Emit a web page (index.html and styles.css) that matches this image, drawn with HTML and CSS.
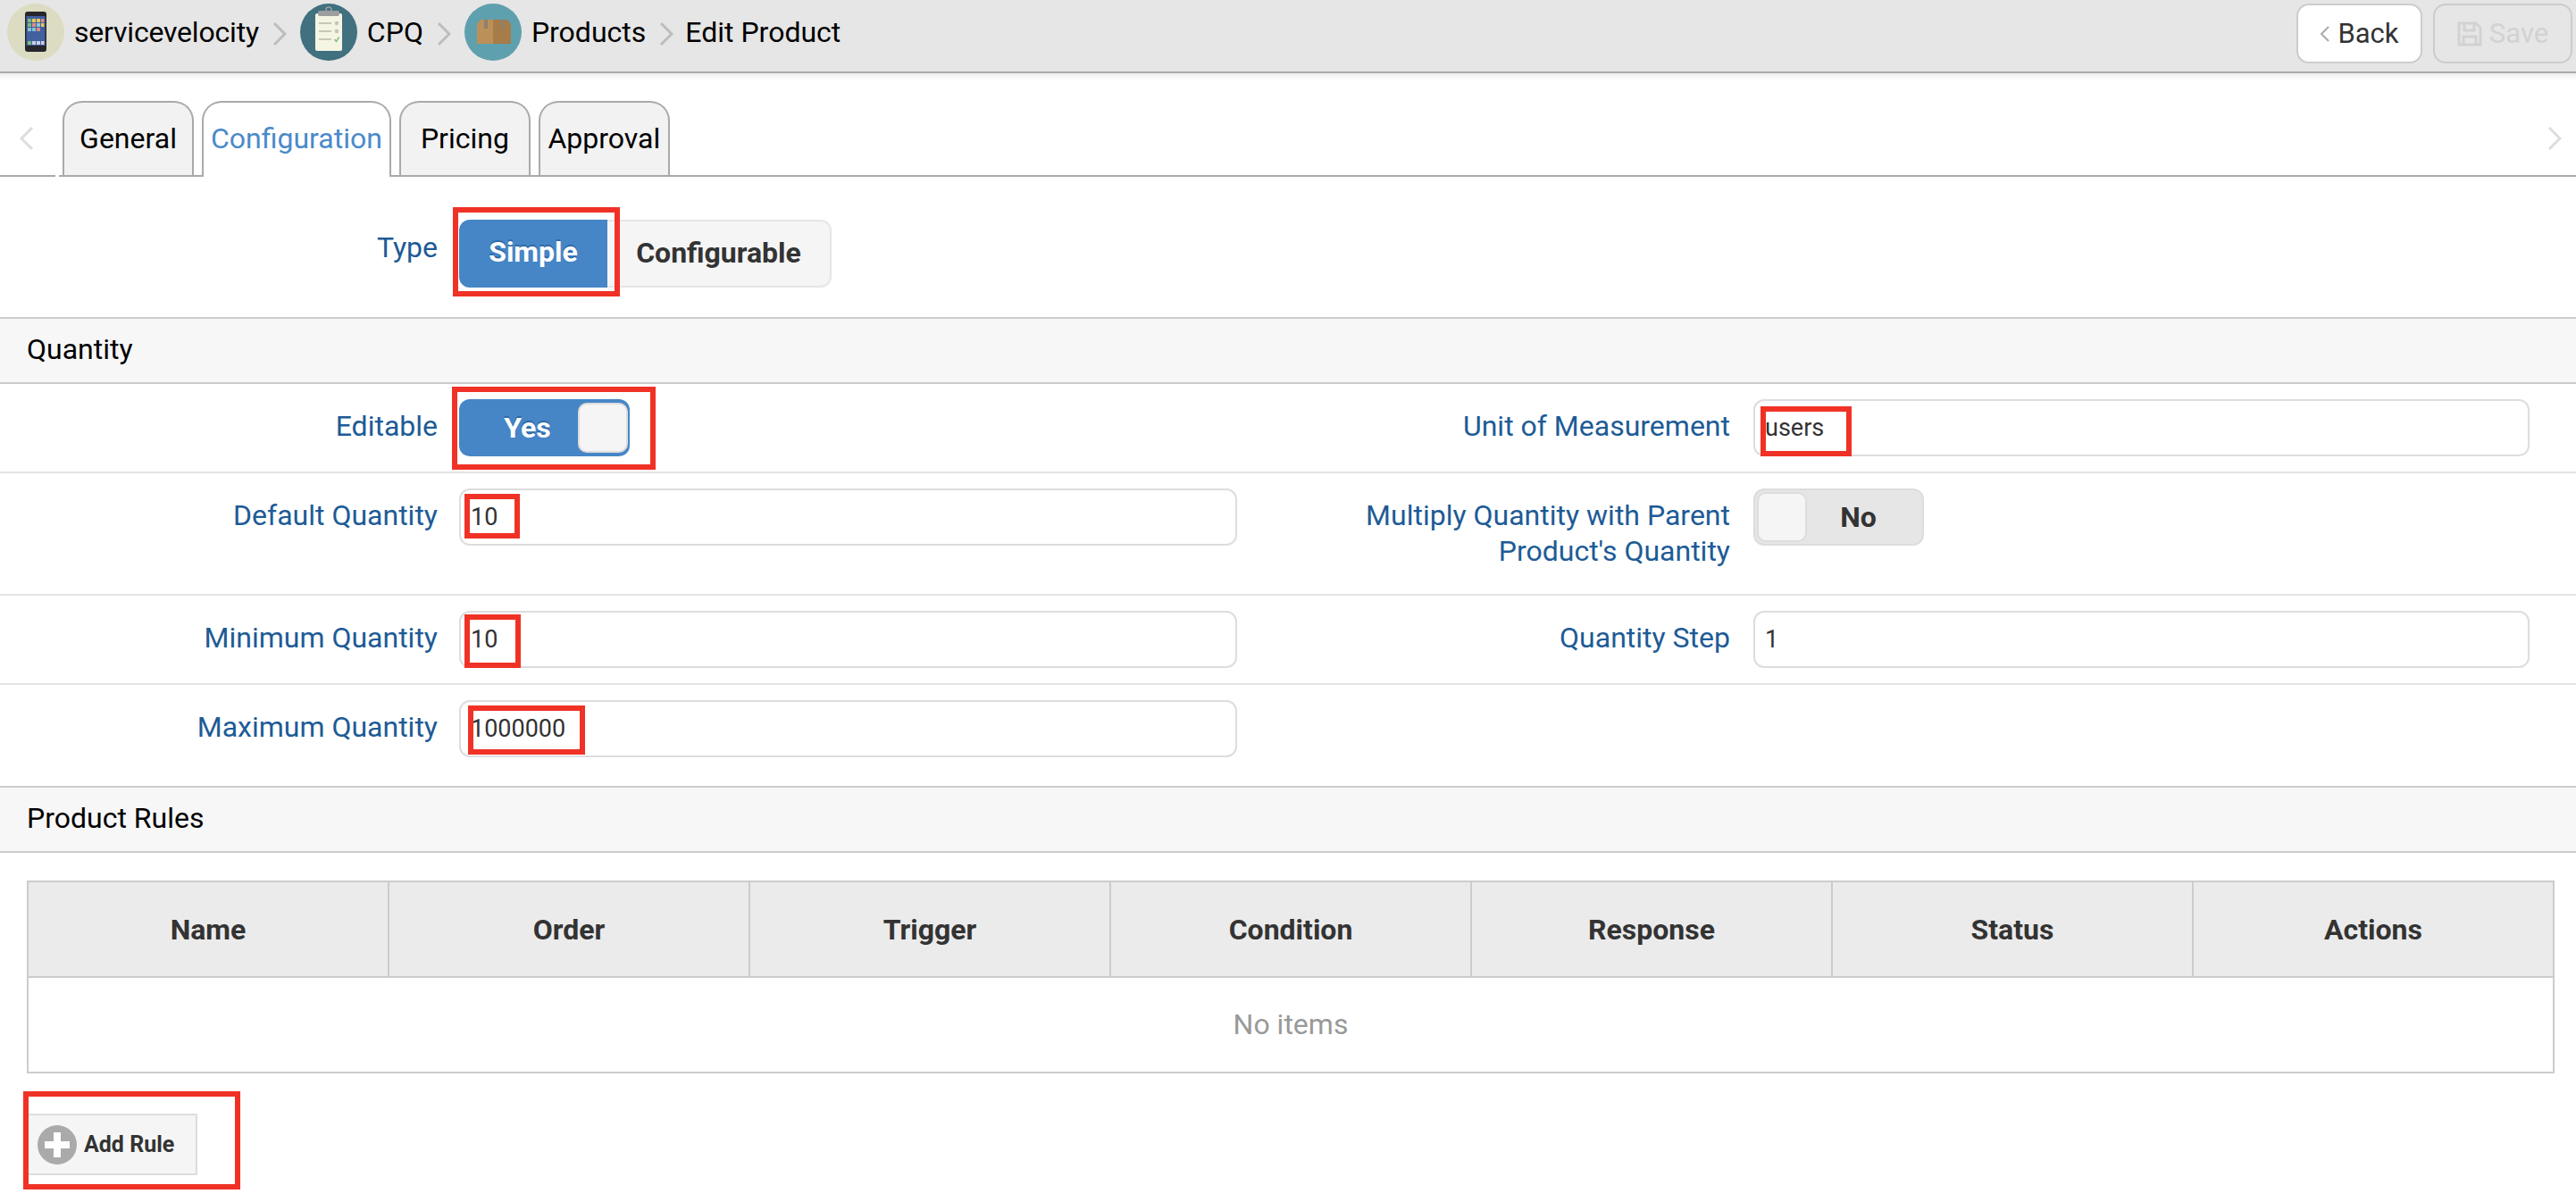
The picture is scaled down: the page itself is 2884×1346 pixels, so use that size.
FILE: index.html
```html
<!DOCTYPE html>
<html lang="en">
<head>
  <meta charset="UTF-8" />
  <title>Edit Product</title>
  <link rel="stylesheet" href="styles.css">
</head>
<body>
  <header class="topbar">
    <nav class="crumbs">
      <svg class="crumb-icon" viewBox="0 0 64 64">
        <circle cx="32" cy="32" r="32" fill="#dcdcc2"/>
        <rect x="20" y="9" width="24" height="45" rx="3" fill="#26262b"/>
        <rect x="21.500" y="14" width="21" height="33" fill="#41609f"/>
        <rect x="23" y="17" width="4" height="4" fill="#7dbb7a"/><rect x="28" y="17" width="4" height="4" fill="#e4c75a"/><rect x="33" y="17" width="4" height="4" fill="#e4c75a"/><rect x="38" y="17" width="3.500" height="4" fill="#d98a8a"/>
        <rect x="23" y="22" width="4" height="4" fill="#7dbb7a"/><rect x="28" y="22" width="4" height="4" fill="#e58a8a"/><rect x="33" y="22" width="4" height="4" fill="#8ec6d8"/><rect x="38" y="22" width="3.500" height="4" fill="#e4c75a"/>
        <rect x="23" y="27" width="4" height="4" fill="#7fc4d0"/><rect x="28" y="27" width="4" height="4" fill="#7fc4d0"/><rect x="33" y="27" width="4" height="4" fill="#d98a8a"/>
        <rect x="23" y="42" width="4" height="4" fill="#7dbb7a"/><rect x="28" y="42" width="4" height="4" fill="#c8cfe8"/><rect x="33" y="42" width="4" height="4" fill="#c8cfe8"/><rect x="38" y="42" width="3.500" height="4" fill="#c8cfe8"/>
      </svg>
      <span class="crumb-text first">servicevelocity</span>
      <svg class="crumb-sep" viewBox="0 0 16 28"><path d="M2 2l12 12L2 26" fill="none" stroke="#bdbdbd" stroke-width="3"/></svg>
      <svg class="crumb-icon" viewBox="0 0 64 64">
        <circle cx="32" cy="32" r="32" fill="#41707f"/>
        <rect x="17" y="11" width="30" height="42" rx="2" fill="#f5f5e4"/>
        <rect x="20" y="8" width="24" height="6" rx="2" fill="#9b9f9f"/>
        <circle cx="32" cy="7" r="3" fill="none" stroke="#9b9f9f" stroke-width="1.500"/>
        <path d="M21 22h14M21 31h14M21 40h14" stroke="#b9b9a8" stroke-width="1.500"/>
        <circle cx="41" cy="22" r="2.200" fill="#c4c4b8"/><circle cx="41" cy="31" r="2.200" fill="#c4c4b8"/>
        <path d="M38.500 40l2 2.500 3-5" fill="none" stroke="#7fc07f" stroke-width="1.500"/>
      </svg>
      <span class="crumb-text">CPQ</span>
      <svg class="crumb-sep" viewBox="0 0 16 28"><path d="M2 2l12 12L2 26" fill="none" stroke="#bdbdbd" stroke-width="3"/></svg>
      <svg class="crumb-icon" viewBox="0 0 64 64">
        <circle cx="32" cy="32" r="32" fill="#5fa0ae"/>
        <path d="M14 23l4-5h14v27H14z" fill="#bb9159"/>
        <path d="M32 18h16l4 5v22H32z" fill="#a67c48"/>
        <rect x="22" y="18" width="4" height="10" fill="#8f8068"/>
        <rect x="41" y="18" width="4" height="10" fill="#8f8068"/>
      </svg>
      <span class="crumb-text">Products</span>
      <svg class="crumb-sep last" viewBox="0 0 16 28"><path d="M2 2l12 12L2 26" fill="none" stroke="#bdbdbd" stroke-width="3"/></svg>
      <span class="crumb-text">Edit Product</span>
    </nav>
    <div class="top-actions">
      <button class="top-btn back-btn">
        <svg class="back-chevron" viewBox="0 0 12 20"><path d="M10 2l-8 8 8 8" fill="none" stroke="#aaa" stroke-width="2"/></svg>
        Back
      </button>
      <button class="top-btn save-btn" disabled>
        <svg class="save-icon" viewBox="0 0 28 28"><path d="M2 2h19l5 5v19H2zM8 2v8h11V2M7 26v-9h14v9" fill="none" stroke="#d2d2d2" stroke-width="3"/></svg>
        Save
      </button>
    </div>
  </header>
  <div class="topbar-shadow"></div>

  <div class="tabbar">
    <div class="tab-nav">
      <svg class="tab-arrow" viewBox="0 0 16 26"><path d="M14 1L2 13l12 12" fill="none" stroke="#ddd" stroke-width="3"/></svg>
    </div>
    <div class="tabs">
      <div class="tab">General</div>
      <div class="tab active">Configuration</div>
      <div class="tab">Pricing</div>
      <div class="tab">Approval</div>
      <svg class="tab-arrow right" viewBox="0 0 16 26"><path d="M2 1l12 12L2 25" fill="none" stroke="#ddd" stroke-width="3"/></svg>
    </div>
  </div>

  <div class="type-row">
    <label class="label">Type</label>
    <div class="type-btns">
      <div class="type-btn on">Simple<span class="mark mark-simple"></span></div>
      <div class="type-btn off">Configurable</div>
    </div>
  </div>

  <div class="section-head">Quantity</div>

  <div class="form-row">
    <label class="label">Editable</label>
    <div class="field">
      <div class="switch yes"><span class="switch-text">Yes</span><span class="knob"></span></div>
      <span class="mark mark-yes"></span>
    </div>
    <label class="label label-r">Unit of Measurement</label>
    <div class="field">
      <input class="text-input" type="text" value="users">
      <span class="mark mark-users"></span>
    </div>
  </div>

  <div class="form-row">
    <label class="label">Default Quantity</label>
    <div class="field">
      <input class="text-input" type="text" value="10">
      <span class="mark mark-default"></span>
    </div>
    <label class="label label-r two-line">Multiply Quantity with Parent Product's Quantity</label>
    <div class="field">
      <div class="switch no"><span class="knob"></span><span class="switch-text">No</span></div>
    </div>
  </div>

  <div class="form-row">
    <label class="label">Minimum Quantity</label>
    <div class="field">
      <input class="text-input" type="text" value="10">
      <span class="mark mark-min"></span>
    </div>
    <label class="label label-r">Quantity Step</label>
    <div class="field">
      <input class="text-input" type="text" value="1">
    </div>
  </div>

  <div class="form-row last">
    <label class="label">Maximum Quantity</label>
    <div class="field">
      <input class="text-input" type="text" value="1000000">
      <span class="mark mark-max"></span>
    </div>
  </div>

  <div class="section-head">Product Rules</div>

  <div class="rules">
    <table class="rules-table">
      <thead>
        <tr>
          <th>Name</th>
          <th>Order</th>
          <th>Trigger</th>
          <th>Condition</th>
          <th>Response</th>
          <th>Status</th>
          <th>Actions</th>
        </tr>
      </thead>
      <tbody>
        <tr><td colspan="7">No items</td></tr>
      </tbody>
    </table>
    <button class="add-btn">
      <svg class="add-icon" viewBox="0 0 44 44">
        <circle cx="22" cy="22" r="22" fill="#aaa"/>
        <path d="M18 8h8v10h10v8H26v10h-8V26H8v-8h10z" fill="#fff"/>
      </svg>
      Add Rule
      <span class="mark mark-add"></span>
    </button>
  </div>
</body>
</html>
```

FILE: styles.css
```css
html, body {
  margin: 0;
  padding: 0;
  background: #fff;
  font-family: Roboto, sans-serif;
  color: #000;
}
body {
  height: 1346px;
  overflow: hidden;
}

/* Top bar */
.topbar {
  display: flex;
  justify-content: space-between;
  height: 80px;
  background: #e6e6e6;
  border-bottom: 2px solid #aaa;
}
.topbar-shadow {
  height: 8px;
  background: linear-gradient(#eee, #fff);
}
.crumbs {
  display: flex;
  align-items: center;
  padding-left: 8px;
  height: 72px;
}
.crumb-icon {
  width: 64px;
  height: 64px;
  flex: none;
}
.crumb-text {
  font-size: 32px;
  margin-left: 11px;
  white-space: nowrap;
}
.crumb-text.first {
  letter-spacing: -0.2px;
}
.crumb-sep {
  width: 16px;
  height: 28px;
  margin: 4px 15px 0 15px;
  flex: none;
}
.crumb-sep.last {
  margin-right: 13px;
}
.crumb-sep + .crumb-text {
  margin-left: 0;
}
.top-actions {
  display: flex;
  gap: 12px;
  padding: 4px 4px 0 0;
}
.top-btn {
  display: flex;
  align-items: center;
  justify-content: center;
  height: 67px;
  border: 2px solid #ccc;
  border-radius: 14px;
  font-family: Roboto, sans-serif;
  font-size: 31px;
  padding: 0;
}
.back-btn {
  width: 141px;
  background: #fff;
  color: #333;
}
.back-chevron {
  width: 12px;
  height: 20px;
  margin-right: 8px;
}
.save-btn {
  width: 156px;
  background: #e6e6e6;
  color: #d2d2d2;
}
.save-icon {
  width: 28px;
  height: 28px;
  margin-right: 8px;
}

/* Tabs */
.tabbar {
  display: flex;
  height: 108px;
  gap: 4px;
}
.tab-nav {
  width: 62px;
  border-bottom: 2px solid #aaa;
  box-sizing: content-box;
  height: 106px;
  position: relative;
}
.tab-arrow {
  width: 16px;
  height: 26px;
  position: absolute;
  left: 22px;
  top: 52px;
}
.tab-arrow.right {
  left: auto;
  right: 16px;
}
.tabs {
  flex: 1;
  display: flex;
  align-items: flex-end;
  gap: 9px;
  padding: 0 0 0 4px;
  border-bottom: 2px solid #aaa;
  height: 106px;
  position: relative;
}
.tab {
  min-width: 147px;
  box-sizing: border-box;
  height: 83px;
  line-height: 80px;
  padding: 0 8px;
  text-align: center;
  font-size: 32px;
  background: #f2f2f2;
  border: 2px solid #aaa;
  border-bottom: none;
  border-radius: 22px 22px 0 0;
}
.tab.active {
  height: 85px;
  margin-bottom: -2px;
  background: #fff;
  color: #4a8ac9;
}

/* Form */
.label {
  box-sizing: border-box;
  padding: 10px 24px 0 0;
  text-align: right;
  font-size: 32px;
  line-height: 40px;
  color: #1d5b96;
}
.label-r {
  padding-right: 26px;
}
.two-line {
  padding-left: 60px;
  padding-bottom: 11px;
}
.type-row {
  display: grid;
  grid-template-columns: 514px 1fr;
  padding-top: 48px;
  height: 157px;
  box-sizing: border-box;
}
.type-row .label {
  padding-top: 11px;
}
.type-btns {
  display: flex;
  height: 76px;
}
.type-btn {
  box-sizing: border-box;
  height: 76px;
  line-height: 71px;
  text-align: center;
  font-size: 32px;
  font-weight: bold;
  position: relative;
}
.type-btn.on {
  width: 166px;
  background: #4686c6;
  color: #fff;
  border-radius: 12px 0 0 12px;
  line-height: 73px;
  text-shadow: 0 -2px 0 #2f6aa6;
}
.type-btn.off {
  width: 251px;
  background: #f5f5f5;
  color: #333;
  border: 2px solid #e6e6e6;
  border-left: none;
  border-radius: 0 12px 12px 0;
}
.section-head {
  box-sizing: border-box;
  height: 75px;
  line-height: 68px;
  padding-left: 30px;
  font-size: 32px;
  background: #f7f7f7;
  border-top: 2px solid #ccc;
  border-bottom: 2px solid #ccc;
}
.form-row {
  display: grid;
  grid-template-columns: 514px 871px 578px 869px;
  padding: 17px 0;
  border-bottom: 2px solid #e3e3e3;
}
.form-row.last {
  border-bottom: none;
  padding-bottom: 32px;
}
.field {
  position: relative;
  height: 64px;
}
.text-input {
  box-sizing: border-box;
  display: block;
  width: 100%;
  height: 64px;
  padding: 0 11px;
  border: 2px solid #ddd;
  border-radius: 12px;
  outline: none;
  background: #fff;
  font-family: Roboto, sans-serif;
  font-size: 27px;
  color: #333;
}

/* Switches */
.switch {
  box-sizing: border-box;
  display: flex;
  align-items: center;
  height: 64px;
  border-radius: 12px;
  font-size: 32px;
  font-weight: bold;
}
.switch.yes {
  width: 191px;
  background: #4686c6;
  color: #fff;
}
.switch.no {
  width: 191px;
  background: #e6e6e6;
  color: #333;
  border: 2px solid #ddd;
}
.switch-text {
  flex: 1;
  text-align: center;
}
.switch.yes .switch-text {
  padding-left: 20px;
  text-shadow: 0 -2px 0 #2f6aa6;
}
.switch.no .switch-text {
  padding-right: 14px;
}
.knob {
  box-sizing: border-box;
  flex: none;
  width: 56px;
  height: 56px;
  background: #f5f5f5;
  border: 2px solid #ddd;
  border-radius: 10px;
}
.switch.yes .knob {
  margin-right: 2px;
}
.switch.no .knob {
  margin-left: 2px;
}

/* Rules table */
.rules {
  padding: 31px 24px 0 30px;
}
.rules-table {
  width: 100%;
  table-layout: fixed;
  border-collapse: collapse;
  border: 2px solid #ccc;
}
.rules-table th {
  height: 105px;
  padding: 0;
  font-size: 32px;
  color: #333;
  background: #ebebeb;
  border-left: 2px solid #ccc;
  border-bottom: 2px solid #ccc;
}
.rules-table td {
  height: 103px;
  padding: 0 0 2px;
  text-align: center;
  font-size: 32px;
  color: #999;
}
.add-btn {
  position: relative;
  display: flex;
  align-items: center;
  box-sizing: border-box;
  width: 191px;
  height: 69px;
  margin-top: 45px;
  padding: 0 0 0 10px;
  gap: 8px;
  background: #f5f5f5;
  border: 2px solid #ddd;
  font-family: Roboto, sans-serif;
  font-size: 25px;
  font-weight: bold;
  color: #333;
}
.add-icon {
  width: 44px;
  height: 44px;
  flex: none;
}

/* Red annotation boxes */
.mark {
  position: absolute;
  z-index: 2;
  box-sizing: border-box;
  border: 6px solid #f03226;
}
.mark-simple { left: -7px; top: -14px; width: 187px; height: 100px; }
.mark-yes { left: -8px; top: -14px; width: 228px; height: 93px; }
.mark-users { left: 8px; top: 8px; width: 102px; height: 56px; }
.mark-default { left: 6px; top: 6px; width: 62px; height: 50px; }
.mark-min { left: 6px; top: 4px; width: 63px; height: 60px; }
.mark-max { left: 10px; top: 6px; width: 131px; height: 55px; }
.mark-add { left: -6px; top: -27px; width: 243px; height: 110px; }
```
